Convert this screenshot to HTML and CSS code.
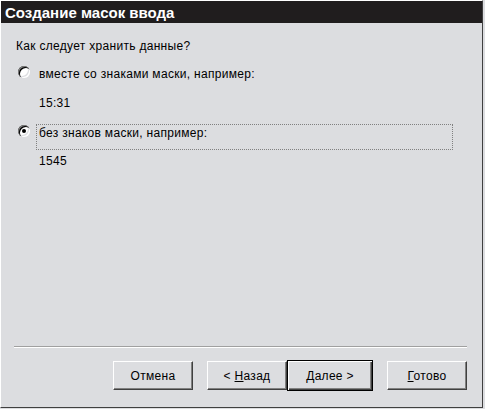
FILE: index.html
```html
<!DOCTYPE html>
<html lang="ru">

<head>
    <meta charset="UTF-8">
    <meta name="viewport" content="width=device-width, initial-scale=1.0">
    <title>Создание масок ввода</title>
    <link rel="stylesheet" href="styles.css">
</head>

<body>
    <div class="dialog">
        <div class="titlebar">Создание масок ввода</div>

        <div class="content">
            <p class="question">Как следует хранить данные?</p>

            <div class="option">
                <span class="radio"></span>
                <span class="label">вместе со знаками маски, например:</span>
            </div>
            <div class="sample sample-first">15:31</div>

            <div class="option option-second checked">
                <span class="radio"></span>
                <span class="label">без знаков маски, например:</span>
            </div>
            <div class="sample sample-second">1545</div>
        </div>

        <div class="footer">
            <div class="separator"></div>
            <div class="buttons">
                <button class="btn btn-cancel">Отмена</button>
                <button class="btn">&lt; <u>Н</u>азад</button>
                <button class="btn btn-default"><u>Д</u>алее &gt;</button>
                <button class="btn btn-finish"><u>Г</u>отово</button>
            </div>
        </div>
    </div>
</body>

</html>
```

FILE: styles.css
```css
* {
    margin: 0;
    padding: 0;
    box-sizing: border-box;
}

body {
    background-color: #dcdde0;
    font-family: "Liberation Sans", Arial, sans-serif;
    font-size: 12px;
    letter-spacing: 0.3px;
    color: #000;
}

.dialog {
    width: 483px;
    height: 408px;
    display: flex;
    flex-direction: column;
    border-top: 1px solid #fff;
    border-left: 1px solid #fff;
    border-right: 1px solid #404040;
    border-bottom: 1px solid #404040;
}

.titlebar {
    height: 22px;
    padding: 2px 0 0 4px;
    line-height: 20px;
    font-size: 15px;
    font-weight: bold;
    letter-spacing: 0;
    color: #fff;
    background-color: #201d1e;
}

.content {
    display: flex;
    flex-direction: column;
}

.question {
    line-height: 16px;
    margin: 15px 0 0 15px;
}

.option {
    display: flex;
    align-items: flex-start;
    margin: 11px 0 0 17px;
}

.option-second {
    margin-top: 13px;
}

.radio {
    position: relative;
    width: 12px;
    height: 12px;
    margin-top: 1px;
    flex-shrink: 0;
    border-radius: 50%;
    background-color: #fff;
    box-shadow: inset 1px 1px #808080, inset 2px 2px #000,
        inset -1px -1px #fff, inset -2px -2px #dcdde0;
}

.checked .radio::after {
    content: "";
    position: absolute;
    left: 4px;
    top: 4px;
    width: 4px;
    height: 4px;
    border-radius: 50%;
    background-color: #000;
}

.label {
    width: 417px;
    height: 26px;
    margin-left: 6px;
    padding-left: 2px;
    line-height: 16px;
    border: 1px dotted transparent;
}

.checked .label {
    border-color: #808080;
}

.sample {
    line-height: 16px;
    margin: 4px 0 0 38px;
}

.sample-second {
    margin-top: 3px;
}

.footer {
    margin-top: auto;
    padding-bottom: 16px;
}

.separator {
    margin: 0 15px 0 13px;
    border-top: 1px solid #a0a0a0;
    border-bottom: 1px solid #fff;
}

.buttons {
    display: flex;
    align-items: center;
    justify-content: flex-end;
    height: 31px;
    margin-top: 12px;
    padding-right: 15px;
}

.btn {
    width: 80px;
    height: 29px;
    font-family: inherit;
    font-size: 12px;
    letter-spacing: 0.3px;
    line-height: 16px;
    color: #000;
    background-color: #dcdde0;
    border: 1px solid;
    border-color: #fff #404040 #404040 #fff;
    box-shadow: inset -1px -1px #808080;
}

.btn-cancel {
    margin-right: 14px;
}

.btn-default {
    width: 86px;
    height: 31px;
    border: 1px solid #000;
    box-shadow: inset 1px 1px #fff, inset -1px -1px #404040, inset -2px -2px #808080;
}

.btn-finish {
    margin-left: 14px;
}
```
